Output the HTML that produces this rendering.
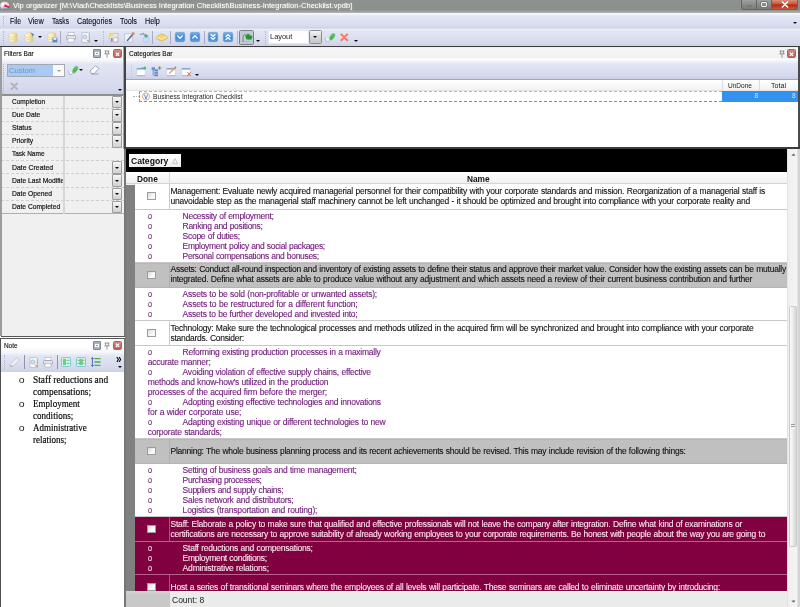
<!DOCTYPE html>
<html><head><meta charset="utf-8"><title>Vip organizer</title>
<style>
*{box-sizing:border-box;margin:0;padding:0}
html,body{width:800px;height:607px;overflow:hidden;background:#f0f0f0}
body{font-family:"Liberation Sans",sans-serif;font-size:6.8px;color:#1a1a1a;position:relative;line-height:1}
.a{position:absolute}
.t{position:absolute;white-space:pre;line-height:1}
/* title bar */
#title{left:0;top:0;width:800px;height:13px;background:linear-gradient(#8e928e 0,#8c908c 10.2px,#9fa39f 11px,#a4a8a4 12.4px,#c8cad0 13px);}
#title .t{color:#fff;font-size:7.9px;left:12.8px;top:2px;text-shadow:0 0 2px #fff8}
#menubar{left:0;top:13px;width:800px;height:15px;background:linear-gradient(#fbfbfe 0,#e3e6f4 3px,#d9ddef 12px,#cfd4e8);}
#menubar .t{font-size:8.3px;color:#101020;top:3.9px;-webkit-text-stroke:.12px #101020}
#toolbar{left:0;top:27.5px;width:800px;height:18.5px;background:linear-gradient(#c8ccde 0,#eceef8 1px,#e2e5f3 4px,#d6daec 14px,#cdd2e6);}
.hline{position:absolute;height:2px;background:#3c3c3c}
.vline{position:absolute;width:2px;background:#4a4a4a}
.ptitle{position:absolute;height:13px;background:linear-gradient(#ffffff 60%,#f6f6f6);}
.ptitle .t{left:3px;top:2px;font-size:7.6px;color:#161616;-webkit-text-stroke:.16px #161616}
.ptool{position:absolute;background:linear-gradient(#f7f8fc 0,#e2e5f3 4px,#d5d9ec 80%,#cbd0e6);}
.grip{position:absolute;width:1px;border-left:1px dotted #b4b8cc}
.sep{position:absolute;width:1px;background:#a9adc4}
/* filter grid */
.frow{position:absolute;left:1px;width:123px;height:13.11px;border-bottom:1px dashed #cfcfcf;background:#f0f0f0}
.frow .t{left:11.1px;top:2.7px;font-size:7.6px;color:#141414;-webkit-text-stroke:.2px #141414;transform-origin:0 0}
.frow i{position:absolute;left:62.4px;top:0;width:1.2px;height:13.2px;background:#d6d6d6}
.frow b{position:absolute;left:111.2px;top:0;width:10.2px;height:12.6px;border:1px solid #9c9c9c;border-radius:1px;background:linear-gradient(#f8f8f8,#e4e4e4 45%,#d2d2d2)}
.frow b:after{content:"";position:absolute;left:1.9px;top:4.3px;border:2.2px solid transparent;border-top:2.6px solid #0a0a0a;border-bottom:0}
/* grid */
.row{position:absolute;left:135px;width:652.5px;}
.row .c1{position:absolute;left:0;top:0;bottom:0;width:35px;border-right:1.2px solid #cccccc}
.row .cb{position:absolute;left:12.3px;width:8.3px;height:8.2px;border:1px solid #9c9c9c;background:linear-gradient(135deg,#d8d8d8,#f8f8f8 60%)}
.row .t{left:35.5px;font-size:8.5px;letter-spacing:-.22px;word-spacing:.35px;color:#111;-webkit-text-stroke:.1px #111;margin-top:.25px}
.w{background:#fff;border-bottom:1px solid #c8c8c8}
.g{background:#c0c0c0;border-bottom:1px solid #b4b4b4;box-shadow:inset 0 1px 0 #b8b8b8}
.g .c1{border-right-color:#b0b0b0 !important}
.m{background:#800040;border-bottom:1px solid #b86090}
.m .t{color:#fbe6ee !important;-webkit-text-stroke-color:#fbe6ee !important}
.m .c1{border-right-color:#a85080 !important}
.pv{position:absolute;left:135px;width:652.5px;background:#fff;border-bottom:1px solid #c8c8c8}
.pv .t{font-size:8.5px;letter-spacing:-.22px;word-spacing:.35px;color:#70187a;-webkit-text-stroke:.12px #70187a;margin-top:.35px}
.pv.m{background:#800040;border-bottom-color:#b86090}
.pv .bu{letter-spacing:0;font-size:9px;margin-top:.1px;transform:scaleX(.8);transform-origin:0 0;-webkit-text-stroke:.1px currentColor;color:#5e2a62}
.pv.m .bu{color:#f4e4ec !important}

.ic{position:absolute;overflow:visible}
.dd{position:absolute;width:0;height:0;border-left:2px solid transparent;border-right:2px solid transparent;border-top:2.5px solid #0a0a14}
.wb{position:absolute;top:0;height:9.6px;border:1px solid #626662;border-top:0}
</style></head><body><div id="root" style="position:absolute;left:0;top:0;width:800px;height:607px;overflow:hidden;will-change:transform;filter:blur(.4px)">
<!-- title bar -->
<div class="a" id="title"><span class="t" style="font-size:7.9px;transform:scaleX(0.959);transform-origin:0 0">Vip organizer [M:\Vlad\Checklists\Business Integration Checklist\Business-Integration-Checklist.vpdb]</span>
<svg class="ic" style="left:0px;top:1px" width="11" height="10" viewBox="0 0 11 10"><ellipse cx="4.6" cy="4.4" rx="4.4" ry="3.6" fill="#f0dce4"/><path d="M4 3 L9.6 5.6 L8.8 7.2 L3.4 5.2 Z" fill="#d03038"/><path d="M2.4 6.6 H8 V9.4 H2.4 Z" fill="#7088c8" opacity=".75"/><circle cx="3" cy="3.4" r="1.6" fill="#fff"/></svg>
<div class="wb" style="left:741px;width:16px;border-radius:0 0 0 3px;background:linear-gradient(#a0a0a0,#8a8a8a 50%,#7c7c7c)"><div class="a" style="left:3.5px;top:4.8px;width:7px;height:2.6px;background:#f4f4f4;border:.5px solid #777;border-radius:1px"></div></div>
<div class="wb" style="left:756px;width:16px;background:linear-gradient(#a0a0a0,#8a8a8a 50%,#7c7c7c)"><div class="a" style="left:4px;top:1.8px;width:6px;height:5.4px;border:1.4px solid #f0f0f0;outline:.5px solid #777;border-radius:1px"></div></div>
<div class="wb" style="left:771px;width:27px;border-radius:0 0 3px 0;background:linear-gradient(#d89080,#c8543c 45%,#b02c10 55%,#c8583a)"><svg class="ic" style="left:9px;top:1.2px" width="8" height="7" viewBox="0 0 8 7"><path d="M1.4 1 L6.6 6 M6.6 1 L1.4 6" stroke="#fff" stroke-width="1.6" stroke-linecap="round"/></svg></div>
</div>
<div class="a" id="menubar">
<span class="t" style="left:10px;font-size:8.3px;transform:scaleX(0.822);transform-origin:0 0">File</span><span class="t" style="left:28px;font-size:8.3px;transform:scaleX(0.88);transform-origin:0 0">View</span><span class="t" style="left:52px;font-size:8.3px;transform:scaleX(0.801);transform-origin:0 0">Tasks</span><span class="t" style="left:77px;font-size:8.3px;transform:scaleX(0.875);transform-origin:0 0">Categories</span><span class="t" style="left:120px;font-size:8.3px;transform:scaleX(0.877);transform-origin:0 0">Tools</span><span class="t" style="left:145px;font-size:8.3px;transform:scaleX(0.872);transform-origin:0 0">Help</span>
<div class="grip" style="left:3px;top:3px;height:10px"></div><div class="dd" style="left:792.8px;top:9.3px;border-width:2.4px 2.2px 0 2.2px"></div>
</div>
<div class="a" id="toolbar">
<div class="grip" style="left:3px;top:3px;height:14px"></div>
<svg class="ic" style="left:7.5px;top:4px" width="11" height="11" viewBox="0 0 11 11"><defs><linearGradient id="dbg7.5" x1="0" x2="1"><stop offset="0" stop-color="#fffbe2"/><stop offset=".6" stop-color="#f6e8a8"/><stop offset="1" stop-color="#dcc278"/></linearGradient></defs><path d="M1 2.2 C1 .4 9 .4 9 2.2 V8.6 C9 10.6 1 10.6 1 8.6 Z" fill="url(#dbg7.5)" stroke="#d4c088" stroke-width=".5"/><path d="M1 4.4 C2 5.8 8 5.8 9 4.4 M1 6.6 C2 8 8 8 9 6.6" fill="none" stroke="#e0cc90" stroke-width=".6"/></svg><svg class="ic" style="left:23.5px;top:4px" width="11" height="11" viewBox="0 0 11 11"><defs><linearGradient id="dbg23.5" x1="0" x2="1"><stop offset="0" stop-color="#fffbe2"/><stop offset=".6" stop-color="#f6e8a8"/><stop offset="1" stop-color="#dcc278"/></linearGradient></defs><path d="M1 2.2 C1 .4 9 .4 9 2.2 V8.6 C9 10.6 1 10.6 1 8.6 Z" fill="url(#dbg23.5)" stroke="#d4c088" stroke-width=".5"/><path d="M1 4.4 C2 5.8 8 5.8 9 4.4 M1 6.6 C2 8 8 8 9 6.6" fill="none" stroke="#e0cc90" stroke-width=".6"/><path d="M6.6 .4 L10.2 2.6 L8.6 4.6 Z" fill="#5a84cc"/></svg>
<div class="dd" style="left:37.5px;top:8px"></div>
<svg class="ic" style="left:47px;top:4px" width="11" height="11" viewBox="0 0 11 11"><defs><linearGradient id="dbg47" x1="0" x2="1"><stop offset="0" stop-color="#fffbe2"/><stop offset=".6" stop-color="#f6e8a8"/><stop offset="1" stop-color="#dcc278"/></linearGradient></defs><path d="M1 2.2 C1 .4 9 .4 9 2.2 V8.6 C9 10.6 1 10.6 1 8.6 Z" fill="url(#dbg47)" stroke="#d4c088" stroke-width=".5"/><path d="M1 4.4 C2 5.8 8 5.8 9 4.4 M1 6.6 C2 8 8 8 9 6.6" fill="none" stroke="#e0cc90" stroke-width=".6"/><rect x="5.4" y="5.8" width="5" height="4.6" fill="#6484cc"/><rect x="6.4" y="5.8" width="3" height="2" fill="#eef0fa"/></svg>
<div class="sep" style="left:60px;top:3px;height:13px"></div>
<svg class="ic" style="left:65.5px;top:4px" width="10" height="11" viewBox="0 0 10 11"><rect x="2" y=".5" width="6" height="3" fill="#fff" stroke="#a0a4b4" stroke-width=".5"/><rect x=".5" y="3.5" width="9" height="4" rx="1" fill="#e4e6ee" stroke="#8a8e9e" stroke-width=".6"/><rect x="2" y="6.5" width="6" height="3.6" fill="#fff" stroke="#9a9eae" stroke-width=".5"/></svg>
<svg class="ic" style="left:81px;top:4px" width="10" height="11" viewBox="0 0 10 11"><rect x="1" y=".8" width="7.6" height="9.4" fill="#fbfbfd" stroke="#a8acbc" stroke-width=".6"/><circle cx="4" cy="5" r="2.2" fill="#c8e0f0" stroke="#90a8c0" stroke-width=".5"/><path d="M6 8 L9 10" stroke="#d09070" stroke-width="1.2"/><rect x="7.6" y="2" width="1.4" height="7" fill="#c8b8a8"/></svg>
<div class="dd" style="left:94px;top:12.5px;border-width:2.3px 2.1px 0 2.1px"></div>
<div class="grip" style="left:103px;top:3px;height:14px"></div>
<svg class="ic" style="left:108px;top:4px" width="11" height="11" viewBox="0 0 11 11"><rect x="2" y="1.5" width="8" height="8.5" fill="#e8ecf6" stroke="#9aa4c0" stroke-width=".5"/><path d="M.5 2 L5.5 1 L6 4 L1 5 Z" fill="#f6e060"/><circle cx="7.6" cy="7.6" r="2.6" fill="#fbeef0" stroke="#e0909c" stroke-width=".7"/><rect x="3" y="6" width="1.6" height="3.6" fill="#8090b0"/></svg>
<svg class="ic" style="left:124px;top:4px" width="11" height="11" viewBox="0 0 11 11"><rect x=".8" y="1.6" width="7.6" height="8.4" fill="#eef0f8" stroke="#aab0c8" stroke-width=".5"/><path d="M3 9 L8.6 2.4" stroke="#6a7088" stroke-width="1.6"/><circle cx="9.2" cy="1.6" r="1.4" fill="#e08060"/></svg>
<svg class="ic" style="left:139px;top:4px" width="11" height="11" viewBox="0 0 11 11"><ellipse cx="7" cy="7.6" rx="3" ry="2.8" fill="#c4e0f6" stroke="#9cc0e4" stroke-width=".5"/><path d="M1 2.6 L4.4 1.4 L6 4.4" fill="none" stroke="#8898d0" stroke-width="1.2"/><path d="M6 1.6 L9.6 4 L6.4 6 Z" fill="#4cb04c"/></svg>
<div class="sep" style="left:152px;top:3px;height:13px"></div>
<svg class="ic" style="left:156px;top:5px" width="12" height="9" viewBox="0 0 12 9"><path d="M.5 4 L5.6 .8 L11.2 3.4 L11.2 5.4 L5.6 8.2 L.5 5.6 Z" fill="#f0d878" stroke="#c8a84c" stroke-width=".6"/><path d="M.5 4 L5.6 6.2 L11.2 3.4" fill="none" stroke="#fff6c0" stroke-width=".7"/></svg>
<div class="sep" style="left:170px;top:3px;height:13px"></div>
<svg class="ic" style="left:175px;top:4.5px" width="10" height="10" viewBox="0 0 10 10"><defs><linearGradient id="bb175" x1="0" y1="0" x2="0" y2="1"><stop offset="0" stop-color="#7ab4ec"/><stop offset=".5" stop-color="#3f88d8"/><stop offset="1" stop-color="#5a9ce0"/></linearGradient></defs><rect x=".3" y=".3" width="9.4" height="9.4" rx="1.6" fill="url(#bb175)" stroke="#5a8ccc" stroke-width=".5"/><path d="M2.8 4 L5 6.2 L7.2 4" fill="none" stroke="#fff" stroke-width="1.3" stroke-linecap="round" stroke-linejoin="round"/></svg><svg class="ic" style="left:190px;top:4.5px" width="10" height="10" viewBox="0 0 10 10"><defs><linearGradient id="bb190" x1="0" y1="0" x2="0" y2="1"><stop offset="0" stop-color="#7ab4ec"/><stop offset=".5" stop-color="#3f88d8"/><stop offset="1" stop-color="#5a9ce0"/></linearGradient></defs><rect x=".3" y=".3" width="9.4" height="9.4" rx="1.6" fill="url(#bb190)" stroke="#5a8ccc" stroke-width=".5"/><path d="M2.8 6 L5 3.8 L7.2 6" fill="none" stroke="#fff" stroke-width="1.3" stroke-linecap="round" stroke-linejoin="round"/></svg>
<div class="sep" style="left:204px;top:3px;height:13px"></div>
<svg class="ic" style="left:208px;top:4.5px" width="10" height="10" viewBox="0 0 10 10"><defs><linearGradient id="bb208" x1="0" y1="0" x2="0" y2="1"><stop offset="0" stop-color="#7ab4ec"/><stop offset=".5" stop-color="#3f88d8"/><stop offset="1" stop-color="#5a9ce0"/></linearGradient></defs><rect x=".3" y=".3" width="9.4" height="9.4" rx="1.6" fill="url(#bb208)" stroke="#5a8ccc" stroke-width=".5"/><path d="M3 2.6 L5 4.4 L7 2.6 M3 5.4 L5 7.2 L7 5.4" fill="none" stroke="#fff" stroke-width="1.3" stroke-linecap="round" stroke-linejoin="round"/></svg><svg class="ic" style="left:223px;top:4.5px" width="10" height="10" viewBox="0 0 10 10"><defs><linearGradient id="bb223" x1="0" y1="0" x2="0" y2="1"><stop offset="0" stop-color="#7ab4ec"/><stop offset=".5" stop-color="#3f88d8"/><stop offset="1" stop-color="#5a9ce0"/></linearGradient></defs><rect x=".3" y=".3" width="9.4" height="9.4" rx="1.6" fill="url(#bb223)" stroke="#5a8ccc" stroke-width=".5"/><path d="M3 4.6 L5 2.8 L7 4.6 M3 7.4 L5 5.6 L7 7.4" fill="none" stroke="#fff" stroke-width="1.3" stroke-linecap="round" stroke-linejoin="round"/></svg>
<div class="sep" style="left:236.5px;top:3px;height:13px;background:#b8bccf"></div>
<div class="a" style="left:239px;top:2px;width:15px;height:15px;border:1px solid #7c808c;border-radius:1.5px;background:#c4c9d8"></div>
<svg class="ic" style="left:241.5px;top:4px" width="11" height="11" viewBox="0 0 11 11"><path d="M1 10 V5 C1 2.6 3 2.2 4 3.4" fill="none" stroke="#6a8a6a" stroke-width="1"/><path d="M3.2 3.4 L6 1.4 L10.6 4.6 L9.2 7.8 L4.4 7.2 Z" fill="#23912f"/><path d="M4 3.8 L6.2 2.4 L9.4 4.8" fill="none" stroke="#4cb84c" stroke-width=".7"/><path d="M2 10 H8" stroke="#a8b8a8" stroke-width=".8"/></svg>
<div class="dd" style="left:255.5px;top:12.5px;border-width:2.3px 2.1px 0 2.1px"></div>
<div class="grip" style="left:265px;top:3px;height:14px"></div>
<div class="a" style="left:268px;top:2.5px;width:41px;height:13.5px;background:#fff;border:1px solid #e4e6f0"></div>
<span class="t" style="left:270px;top:5.5px;color:#1c1c24;font-size:8.0px;transform:scaleX(0.928);transform-origin:0 0">Layout</span>
<div class="a" style="left:309px;top:2.5px;width:12.5px;height:13.5px;border:1px solid #8c8c8c;border-radius:1.5px;background:linear-gradient(#f4f4f4,#d6d6d6 50%,#c6c6c6)"><div class="dd" style="left:3.2px;top:4.5px;border-width:2.5px 2.2px 0 2.2px"></div></div>
<svg class="ic" style="left:324px;top:4px" width="12" height="11" viewBox="0 0 12 11"><path d="M1.2 5.6 L2.2 9.6 L4.4 9.8 L6 7.6" fill="#f4f6fc" stroke="#a0a8d8" stroke-width=".8"/><ellipse cx="8.2" cy="4.8" rx="2.3" ry="4.2" transform="rotate(32 8.2 4.8)" fill="#52b45a" stroke="#c4e4d0" stroke-width=".6"/><path d="M7.4 2.6 L9.4 3.8" stroke="#8cd494" stroke-width=".8"/></svg>
<svg class="ic" style="left:340.3px;top:5.2px" width="8.6" height="8.6" viewBox="0 0 10 10"><path d="M1.6 1.6 L8.4 8.4 M8.4 1.6 L1.6 8.4" stroke="#ec7c68" stroke-width="2.3" stroke-linecap="round"/></svg>
<div class="dd" style="left:353.5px;top:12.5px;border-width:2.3px 2.1px 0 2.1px"></div>
</div>
<div class="hline" style="left:0;top:45.7px;width:800px;height:1.4px"></div>

<!-- LEFT: Filters Bar -->
<div class="a" style="left:1px;top:47px;width:123px;height:2px;background:#fff"></div><div class="ptitle" style="left:1px;top:48px;width:123px"><span class="t" style="font-size:7.6px;transform:scaleX(0.858);transform-origin:0 0">Filters Bar</span><div class="a" style="left:91.5px;top:1.2px;width:8.5px;height:8.5px;border:1px solid #7c8698;border-radius:1px;background:#aab2c2"><div class="a" style="left:1.5px;top:1.8px;width:3.6px;height:3px;border:.8px solid #fff;background:#8c96aa"></div></div><svg class="ic" style="left:103.0px;top:1.7px" width="6" height="8" viewBox="0 0 6 8"><path d="M.6 1 H5.4 M1.6 1 V3.6 M4.4 1 V3.6 M.3 3.8 H5.7 M3 4 V7.6" stroke="#6a6a6a" stroke-width=".7" fill="none"/></svg><div class="a" style="left:111.5px;top:1.2px;width:9px;height:9px;border:1px solid #a06860;border-radius:1.5px;background:linear-gradient(#d08c84,#b85c54)"><svg class="ic" style="left:1.2px;top:1.4px" width="5" height="4.6" viewBox="0 0 5 4.6"><path d="M.8 .6 L4.2 4 M4.2 .6 L.8 4" stroke="#fff" stroke-width="1.1"/></svg></div></div>
<div class="ptool" style="left:1px;top:60px;width:123px;height:35px"><div class="grip" style="left:2px;top:4px;height:29px"></div>
<div class="a" style="left:6.3px;top:3.8px;width:57.5px;height:13.7px;border:1px solid #a4a8b4;background:#f8f8f8"></div>
<div class="a" style="left:7.3px;top:4.8px;width:44.5px;height:11.7px;background:#a9cbf3"></div>
<span class="t" style="left:8.3px;top:7px;color:#7690b6;font-size:8.0px;transform:scaleX(0.943);transform-origin:0 0">Custom</span>
<div class="dd" style="left:55.8px;top:9.8px;border-top-color:#9a9a9a"></div>
<svg class="ic" style="left:66px;top:4px" width="12" height="12" viewBox="0 0 12 12"><path d="M1.2 6.4 L2.2 10.4 L4.4 10.6 L6 8.4" fill="#f4f6fc" stroke="#a0a8d8" stroke-width=".8"/><ellipse cx="8.2" cy="5.6" rx="2.3" ry="4.2" transform="rotate(32 8.2 5.6)" fill="#52b45a" stroke="#c4e4d0" stroke-width=".6"/><path d="M7.4 3.4 L9.4 4.6" stroke="#8cd494" stroke-width=".8"/></svg>
<div class="dd" style="left:77.8px;top:9px;border-width:2.3px 2.1px 0 2.1px"></div>
<svg class="ic" style="left:88px;top:5px" width="11" height="10" viewBox="0 0 11 10"><path d="M1 6 L6.4 .8 L10 3.4 L5 8.6 H2.4 Z" fill="#fbfbfd" stroke="#8a8e9a" stroke-width=".7"/><path d="M2 9 H9.6" stroke="#8a8e9a" stroke-width=".7"/></svg>
<svg class="ic" style="left:9px;top:22px" width="8.5" height="8.5" viewBox="0 0 9 9"><path d="M1.6 1.6 L7.4 7.4 M7.4 1.6 L1.6 7.4" stroke="#b0b4b2" stroke-width="2" stroke-linecap="round"/></svg>
<div class="dd" style="left:116.5px;top:28.5px;border-width:2.3px 2.1px 0 2.1px"></div></div>
<div class="a" style="left:1px;top:94.3px;width:123px;height:1.4px;background:#909090"></div>
<div class="frow" style="top:95.8px"><span class="t" style="font-size:7.6px;transform:scaleX(0.861);transform-origin:0 0">Completion</span><i></i><b></b></div>
<div class="frow" style="top:108.91px"><span class="t" style="top:1.9px;font-size:7.6px;transform:scaleX(0.879);transform-origin:0 0">Due Date</span><i></i><b></b></div>
<div class="frow" style="top:122.02px"><span class="t" style="top:1.9px;font-size:7.6px;transform:scaleX(0.91);transform-origin:0 0">Status</span><i></i><b></b></div>
<div class="frow" style="top:135.13px"><span class="t" style="top:1.9px;font-size:7.6px;transform:scaleX(0.897);transform-origin:0 0">Priority</span><i></i><b></b></div>
<div class="frow" style="top:148.24px"><span class="t" style="top:1.9px;font-size:7.6px;transform:scaleX(0.856);transform-origin:0 0">Task Name</span><i></i></div>
<div class="frow" style="top:161.35px"><span class="t" style="font-size:7.6px;transform:scaleX(0.91);transform-origin:0 0">Date Created</span><i></i><b></b></div>
<div class="frow" style="top:174.46px"><div class="a" style="left:0;top:0;width:61.7px;height:12.5px;overflow:hidden"><span class="t" style="transform:scaleX(.885);transform-origin:0 0">Date Last Modifie</span></div><i></i><b></b></div>
<div class="frow" style="top:187.57px"><span class="t" style="font-size:7.6px;transform:scaleX(0.887);transform-origin:0 0">Date Opened</span><i></i><b></b></div>
<div class="frow" style="top:200.68px;border-bottom:1px solid #b0b0b0"><span class="t" style="font-size:7.6px;transform:scaleX(0.877);transform-origin:0 0">Date Completed</span><i></i><b></b></div>
<div class="a" style="left:123px;top:47px;height:102px;width:1.4px;background:#a4a4a4"></div><div class="vline" style="left:124.3px;top:47px;height:102px;width:1.8px;background:#444"></div><div class="vline" style="left:124px;top:149px;height:458px;background:#777"></div>
<div class="a" style="left:0;top:47px;width:1.6px;height:289px;background:#9c9c9c"></div><div class="a" style="left:0;top:339px;width:1.1px;height:268px;background:#505050"></div>
<div class="a" style="left:0;top:335.8px;width:125px;height:3.2px;background:#fafafa"></div><div class="a" style="left:1px;top:335.8px;width:124px;height:.9px;background:#585858"></div><div class="a" style="left:0;top:338.1px;width:125px;height:.9px;background:#585858"></div>

<!-- LEFT: Note -->
<div class="ptitle" style="left:1px;top:338.5px;width:123px;height:13.5px"><span class="t" style="top:3.3px;font-size:7.6px;transform:scaleX(0.841);transform-origin:0 0">Note</span><div class="a" style="left:91.5px;top:2.6px;width:8.5px;height:8.5px;border:1px solid #7c8698;border-radius:1px;background:#aab2c2"><div class="a" style="left:1.5px;top:1.8px;width:3.6px;height:3px;border:.8px solid #fff;background:#8c96aa"></div></div><svg class="ic" style="left:103.0px;top:3.1px" width="6" height="8" viewBox="0 0 6 8"><path d="M.6 1 H5.4 M1.6 1 V3.6 M4.4 1 V3.6 M.3 3.8 H5.7 M3 4 V7.6" stroke="#6a6a6a" stroke-width=".7" fill="none"/></svg><div class="a" style="left:111.5px;top:2.6px;width:9px;height:9px;border:1px solid #a06860;border-radius:1.5px;background:linear-gradient(#d08c84,#b85c54)"><svg class="ic" style="left:1.2px;top:1.4px" width="5" height="4.6" viewBox="0 0 5 4.6"><path d="M.8 .6 L4.2 4 M4.2 .6 L.8 4" stroke="#fff" stroke-width="1.1"/></svg></div></div>
<div class="ptool" style="left:1px;top:352px;width:123px;height:19.5px"><div class="grip" style="left:3px;top:3px;height:14px"></div>
<svg class="ic" style="left:8px;top:4px" width="12" height="12" viewBox="0 0 12 12"><path d="M1 10.6 L2 7.4 L8 1.6 L10.6 4 L4.6 9.8 Z" fill="#f0f0f4" stroke="#b8b8c0" stroke-width=".7"/><path d="M1 10.6 L3.6 10" stroke="#a8a8a8" stroke-width=".8"/></svg>
<div class="sep" style="left:22.5px;top:3px;height:14px;background:#9094a8"></div>
<svg class="ic" style="left:28px;top:4.5px" width="10" height="11" viewBox="0 0 10 11"><rect x="1" y=".8" width="7.6" height="9.4" fill="#fbfbfd" stroke="#a8acbc" stroke-width=".6"/><circle cx="4" cy="5" r="2.2" fill="#c8e0f0" stroke="#90a8c0" stroke-width=".5"/><path d="M6 8 L9 10" stroke="#d09070" stroke-width="1.2"/><rect x="7.6" y="2" width="1.4" height="7" fill="#c8b8a8"/></svg>
<svg class="ic" style="left:42px;top:4.5px" width="10" height="11" viewBox="0 0 10 11"><rect x="2" y=".5" width="6" height="3" fill="#fff" stroke="#a0a4b4" stroke-width=".5"/><rect x=".5" y="3.5" width="9" height="4" rx="1" fill="#e4e6ee" stroke="#8a8e9e" stroke-width=".6"/><rect x="2" y="6.5" width="6" height="3.6" fill="#fff" stroke="#9a9eae" stroke-width=".5"/></svg>
<div class="sep" style="left:55.5px;top:3px;height:14px;background:#9094a8"></div>
<svg class="ic" style="left:60px;top:5px" width="10" height="10" viewBox="0 0 10 10"><rect x=".5" y=".5" width="9" height="9" rx="1" fill="#d4f2e0" stroke="#6cc0cc" stroke-width=".8"/><rect x="2" y="2" width="3" height="6" fill="#6ccc88"/><path d="M5.6 3.4 H8.4 M5.6 6.4 H8.4" stroke="#6ccc88" stroke-width="1"/></svg>
<svg class="ic" style="left:75px;top:5px" width="10" height="10" viewBox="0 0 10 10"><rect x=".5" y=".5" width="9" height="9" rx="1" fill="#d4f2e0" stroke="#6cc0cc" stroke-width=".8"/><rect x="3.4" y="2" width="3.2" height="6" fill="#6ccc88"/><path d="M1.6 3.4 H8.4 M1.6 6.4 H8.4" stroke="#6ccc88" stroke-width="1"/></svg>
<svg class="ic" style="left:90px;top:5px" width="10" height="10" viewBox="0 0 10 10"><path d="M3.4 1.6 H9.6 M3.4 5 H9.6 M3.4 8.4 H9.6" stroke="#58a858" stroke-width="1.3"/><path d="M1.4 .6 V9.4 M.4 2 L1.4 .6 L2.4 2 M.4 8 L1.4 9.4 L2.4 8" stroke="#3a5cb8" stroke-width=".9" fill="none"/></svg>
<span class="t" style="left:115.4px;top:.5px;font-size:12.5px;font-weight:bold;color:#0c0c0c;transform:scaleX(.8);transform-origin:0 0">»</span>
<div class="dd" style="left:116.5px;top:14px;border-width:2.3px 2.1px 0 2.1px"></div></div>
<div class="a" id="note" style="left:1px;top:371.5px;width:123px;height:236px;background:#fff;font-family:'Liberation Serif',serif;font-size:9.5px;color:#000;-webkit-text-stroke:.15px #000">
<span class="t" style="left:17.6px;top:3.8px;font-family:'Liberation Sans',sans-serif;font-size:9.6px;-webkit-text-stroke:0;color:#222;transform:scaleX(1.1);transform-origin:50% 50%">o</span><span class="t" style="left:32.1px;top:4.4px;transform:scaleX(0.984);transform-origin:0 0">Staff reductions and</span>
<span class="t" style="left:32.1px;top:16.4px;transform:scaleX(0.983);transform-origin:0 0">compensations;</span>
<span class="t" style="left:17.6px;top:27.8px;font-family:'Liberation Sans',sans-serif;font-size:9.6px;-webkit-text-stroke:0;color:#222;transform:scaleX(1.1);transform-origin:50% 50%">o</span><span class="t" style="left:32.1px;top:28.4px;transform:scaleX(0.954);transform-origin:0 0">Employment</span>
<span class="t" style="left:32.1px;top:40.4px;transform:scaleX(0.954);transform-origin:0 0">conditions;</span>
<span class="t" style="left:17.6px;top:51.8px;font-family:'Liberation Sans',sans-serif;font-size:9.6px;-webkit-text-stroke:0;color:#222;transform:scaleX(1.1);transform-origin:50% 50%">o</span><span class="t" style="left:32.1px;top:52.4px;transform:scaleX(0.944);transform-origin:0 0">Administrative</span>
<span class="t" style="left:32.1px;top:64.4px;transform:scaleX(0.95);transform-origin:0 0">relations;</span>
</div>

<!-- RIGHT: Categories Bar -->
<div class="ptitle" style="left:126px;top:48px;width:672px;height:12px;background:linear-gradient(#f6f6f6,#f2f2f2 10px,#fff 11.4px)"><span class="t" style="font-size:7.6px;transform:scaleX(0.859);transform-origin:0 0">Categories Bar</span><svg class="ic" style="left:652.5px;top:1.7px" width="6" height="8" viewBox="0 0 6 8"><path d="M.6 1 H5.4 M1.6 1 V3.6 M4.4 1 V3.6 M.3 3.8 H5.7 M3 4 V7.6" stroke="#6a6a6a" stroke-width=".7" fill="none"/></svg><div class="a" style="left:661px;top:1.2px;width:9px;height:9px;border:1px solid #a06860;border-radius:1.5px;background:linear-gradient(#d08c84,#b85c54)"><svg class="ic" style="left:1.2px;top:1.4px" width="5" height="4.6" viewBox="0 0 5 4.6"><path d="M.8 .6 L4.2 4 M4.2 .6 L.8 4" stroke="#fff" stroke-width="1.1"/></svg></div></div>
<div class="ptool" style="left:126px;top:60px;width:672px;height:19px"><div class="grip" style="left:5px;top:4.5px;height:13px;border-color:#c0c4d6"></div><svg class="ic" style="left:9.7px;top:5.6px" width="11" height="11" viewBox="0 0 11 11"><rect x=".8" y="2.2" width="8.4" height="7.4" fill="#fdfdfe" stroke="#c4c8d8" stroke-width=".5"/><rect x=".8" y="2.2" width="8.4" height="1.3" fill="#6c98d0"/><path d="M.8 9.7 H9.2" stroke="#9aa0b4" stroke-width=".7"/><path d="M5.6 2 H9.6 M8.2 .6 L10 2 L8.2 3.4" stroke="#4cac54" stroke-width="1" fill="none"/></svg>
<svg class="ic" style="left:24.7px;top:5.6px" width="11" height="11" viewBox="0 0 11 11"><rect x=".6" y="1.4" width="3.4" height="2.4" fill="#5c88cc"/><path d="M2.2 3.6 V9.6" stroke="#6c94d0" stroke-width="1"/><rect x="3.4" y="3.4" width="3.6" height="2" fill="#5c88cc"/><rect x="3.4" y="5.9" width="3.6" height="2" fill="#6c94d0"/><rect x="3.4" y="8.4" width="3.6" height="1.8" fill="#5c88cc"/><path d="M6.8 2 H10.4 M8.6 .2 V3.8" stroke="#4cac54" stroke-width="1.1"/></svg>
<svg class="ic" style="left:39.7px;top:5.6px" width="11" height="11" viewBox="0 0 11 11"><rect x=".8" y="2.2" width="8.4" height="7.4" fill="#fdfdfe" stroke="#c4c8d8" stroke-width=".5"/><rect x=".8" y="2.2" width="8.4" height="1.3" fill="#6c98d0"/><path d="M.8 9.7 H9.2" stroke="#9aa0b4" stroke-width=".7"/><path d="M3.2 7.6 L8.8 2" stroke="#c8a070" stroke-width="1.3"/><circle cx="9.3" cy="1.5" r="1" fill="#e4705c"/></svg><svg class="ic" style="left:54.7px;top:5.6px" width="11" height="11" viewBox="0 0 11 11"><rect x=".8" y="2.2" width="8.4" height="7.4" fill="#fdfdfe" stroke="#c4c8d8" stroke-width=".5"/><rect x=".8" y="2.2" width="8.4" height="1.3" fill="#6c98d0"/><path d="M.8 9.7 H9.2" stroke="#9aa0b4" stroke-width=".7"/><path d="M6.2 6 L9.8 9.8 M9.8 6 L6.2 9.8" stroke="#e8705c" stroke-width="1"/></svg>
<div class="dd" style="left:69px;top:13.5px;border-width:2.3px 2.1px 0 2.1px"></div></div>
<div class="a" style="left:126px;top:78.6px;width:672px;height:1px;background:#a4a8b8"></div>
<div class="a" style="left:126px;top:79.5px;width:672px;height:68px;background:#fff"></div>
<div class="a" style="left:126px;top:79.5px;width:672px;height:11px;background:linear-gradient(#fff,#f2f2f2);border-bottom:1px solid #e4e4e4"></div><div class="a" style="left:721.5px;top:80px;width:1px;height:10px;background:#dcdcdc"></div><div class="a" style="left:759px;top:80px;width:1px;height:10px;background:#dcdcdc"></div>
<span class="t" style="left:728px;top:82px;font-size:7.6px;transform:scaleX(0.861);transform-origin:0 0">UnDone</span>
<span class="t" style="left:770.5px;top:82px;font-size:7.6px;transform:scaleX(0.935);transform-origin:0 0">Total</span>
<div class="a" style="left:722px;top:91px;width:76px;height:11px;background:#3292f0"></div>
<span class="t" style="left:754.5px;top:93px;font-size:6.8px;color:#cfe6ff">8</span>
<span class="t" style="left:792px;top:93px;font-size:6.8px;color:#cfe6ff">8</span>
<div class="a" style="left:139px;top:91px;width:583px;height:11px;border:1px dashed #8c8c8c;border-top-color:#b4b4b4;border-right:0"></div>
<svg class="ic" style="left:140.5px;top:92px" width="10" height="9" viewBox="0 0 10 9"><circle cx="5" cy="4.5" r="3.6" fill="#fdfdff" stroke="#e0a050" stroke-width=".9"/><path d="M3.4 2.6 L5 7 L6.6 2.6" fill="none" stroke="#5080d0" stroke-width=".9"/></svg><div class="a" style="left:133px;top:96px;width:6px;height:1px;border-top:1px dotted #b0b0b0"></div><span class="t" style="left:153px;top:93px;font-size:7.6px;transform:scaleX(0.88);transform-origin:0 0">Business Integration Checklist</span>
<div class="vline" style="left:798px;top:47px;height:101px;"></div>
<div class="hline" style="left:126px;top:147px;width:674px"></div>

<!-- group band -->
<div class="a" style="left:126px;top:149px;width:662px;height:23px;background:#000"></div>
<div class="a" style="left:129px;top:154px;width:52px;height:13px;background:linear-gradient(#fff,#ededed);"><span class="t" style="left:2px;top:2.5px;font-size:8.6px;font-weight:bold;color:#111">Category</span><svg class="ic" style="left:42.5px;top:3.5px" width="6" height="6" viewBox="0 0 6 6"><path d="M3 .6 L5.4 5.4 H.6 Z" fill="#f4f4f4" stroke="#b4b4b4" stroke-width=".7"/></svg></div>
<!-- header -->
<div class="a" style="left:126px;top:172px;width:662px;height:12px;background:linear-gradient(#fff,#f1f1f1);border-bottom:1px solid #d4d4d4"></div>
<div class="a" style="left:169px;top:172px;width:1px;height:12px;background:#d8d8d8"></div>
<span class="t" style="left:137px;top:175.3px;font-size:8.3px;font-weight:bold;color:#111">Done</span>
<span class="t" style="left:467px;top:175.3px;font-size:8.3px;font-weight:bold;color:#111">Name</span>
<!-- indicator -->
<div class="a" style="left:126px;top:184.6px;width:9px;height:406.4px;background:#808080"></div>
<div class="a" style="left:135px;top:184px;width:653px;height:407px;background:#fff"></div>

<div class="row w" style="top:184px;height:26px"><div class="c1"><div class="cb" style="top:8px"></div></div>
<span class="t" style="top:3px;letter-spacing:-0.215px">Management: Evaluate newly acquired managerial personnel for their compatibility with your corporate standards and mission. Reorganization of a managerial staff is</span>
<span class="t" style="top:13px;letter-spacing:-0.225px">unavoidable step as the managerial staff machinery cannot be left unchanged - it should be optimized and brought into compliance with your corporate reality and</span></div>
<div class="pv" style="top:210px;height:53px">
<span class="t bu" style="left:12.8px;top:2px">o</span><span class="t" style="left:47.6px;top:2px;letter-spacing:-0.292px">Necessity of employment;</span>
<span class="t bu" style="left:12.8px;top:12px">o</span><span class="t" style="left:47.6px;top:12px;letter-spacing:-0.309px">Ranking and positions;</span>
<span class="t bu" style="left:12.8px;top:22px">o</span><span class="t" style="left:47.6px;top:22px;letter-spacing:-0.278px">Scope of duties;</span>
<span class="t bu" style="left:12.8px;top:32px">o</span><span class="t" style="left:47.6px;top:32px;letter-spacing:-0.321px">Employment policy and social packages;</span>
<span class="t bu" style="left:12.8px;top:42px">o</span><span class="t" style="left:47.6px;top:42px;letter-spacing:-0.325px">Personal compensations and bonuses;</span>
</div>
<div class="row g" style="top:263px;height:25px"><div class="c1"><div class="cb" style="top:8px"></div></div>
<span class="t" style="top:2px;letter-spacing:-0.24px">Assets: Conduct all-round inspection and inventory of existing assets to define their status and approve their market value. Consider how the existing assets can be mutually</span>
<span class="t" style="top:12.1px;letter-spacing:-0.213px">integrated. Define what assets are able to produce value without any adjustment and which assets need a review of their current business contribution and further</span></div>
<div class="pv" style="top:288px;height:33px">
<span class="t bu" style="left:12.8px;top:2px">o</span><span class="t" style="left:47.6px;top:2px;letter-spacing:-0.208px">Assets to be sold (non-profitable or unwanted assets);</span>
<span class="t bu" style="left:12.8px;top:12px">o</span><span class="t" style="left:47.6px;top:12px;letter-spacing:-0.173px">Assets to be restructured for a different function;</span>
<span class="t bu" style="left:12.8px;top:22px">o</span><span class="t" style="left:47.6px;top:22px;letter-spacing:-0.243px">Assets to be further developed and invested into;</span>
</div>
<div class="row w" style="top:321px;height:25px"><div class="c1"><div class="cb" style="top:8px"></div></div>
<span class="t" style="top:3px;letter-spacing:-0.229px">Technology: Make sure the technological processes and methods utilized in the acquired firm will be synchronized and brought into compliance with your corporate</span>
<span class="t" style="top:13px;letter-spacing:-0.267px">standards. Consider:</span></div>
<div class="pv" style="top:346px;height:93px">
<span class="t bu" style="left:12.8px;top:1.6px">o</span><span class="t" style="left:47.6px;top:1.6px;letter-spacing:-0.258px">Reforming existing production processes in a maximally</span>
<span class="t" style="left:12.7px;top:11.6px;letter-spacing:-0.226px">accurate manner;</span>
<span class="t bu" style="left:12.8px;top:21.6px">o</span><span class="t" style="left:47.6px;top:21.6px;letter-spacing:-0.237px">Avoiding violation of effective supply chains, effective</span>
<span class="t" style="left:12.7px;top:31.6px;letter-spacing:-0.231px">methods and know-how’s utilized in the production</span>
<span class="t" style="left:12.7px;top:41.6px;letter-spacing:-0.19px">processes of the acquired firm before the merger;</span>
<span class="t bu" style="left:12.8px;top:51.6px">o</span><span class="t" style="left:47.6px;top:51.6px;letter-spacing:-0.252px">Adopting existing effective technologies and innovations</span>
<span class="t" style="left:12.7px;top:61.6px;letter-spacing:-0.163px">for a wider corporate use;</span>
<span class="t bu" style="left:12.8px;top:71.6px">o</span><span class="t" style="left:47.6px;top:71.6px;letter-spacing:-0.22px">Adapting existing unique or different technologies to new</span>
<span class="t" style="left:12.7px;top:81.6px;letter-spacing:-0.216px">corporate standards;</span>
</div>
<div class="row g" style="top:439px;height:25px"><div class="c1"><div class="cb" style="top:8px"></div></div>
<span class="t" style="top:8px;letter-spacing:-0.245px">Planning: The whole business planning process and its recent achievements should be revised. This may include revision of the following things:</span></div>
<div class="pv" style="top:464px;height:53px">
<span class="t bu" style="left:12.8px;top:2px">o</span><span class="t" style="left:47.6px;top:2px;letter-spacing:-0.26px">Setting of business goals and time management;</span>
<span class="t bu" style="left:12.8px;top:12px">o</span><span class="t" style="left:47.6px;top:12px;letter-spacing:-0.352px">Purchasing processes;</span>
<span class="t bu" style="left:12.8px;top:22px">o</span><span class="t" style="left:47.6px;top:22px;letter-spacing:-0.306px">Suppliers and supply chains;</span>
<span class="t bu" style="left:12.8px;top:32px">o</span><span class="t" style="left:47.6px;top:32px;letter-spacing:-0.206px">Sales network and distributors;</span>
<span class="t bu" style="left:12.8px;top:42px">o</span><span class="t" style="left:47.6px;top:42px;letter-spacing:-0.173px">Logistics (transportation and routing);</span>
</div>
<div class="row m" style="top:517px;height:25px"><div class="c1"><div class="cb" style="top:8px"></div></div>
<span class="t" style="top:2.5px;letter-spacing:-0.21px">Staff: Elaborate a policy to make sure that qualified and effective professionals will not leave the company after integration. Define what kind of examinations or</span>
<span class="t" style="top:12.5px;letter-spacing:-0.224px">certifications are necessary to approve suitability of already working employees to your corporate requirements. Be honest with people about the way you are going to</span></div>
<div class="pv m" style="top:542px;height:33px">
<span class="t bu" style="left:12.8px;top:2px">o</span><span class="t" style="left:47.6px;top:2px;letter-spacing:-0.238px">Staff reductions and compensations;</span>
<span class="t bu" style="left:12.8px;top:12px">o</span><span class="t" style="left:47.6px;top:12px;letter-spacing:-0.29px">Employment conditions;</span>
<span class="t bu" style="left:12.8px;top:22px">o</span><span class="t" style="left:47.6px;top:22px;letter-spacing:-0.174px">Administrative relations;</span>
</div>
<div class="row m" style="top:575px;height:16px;border-bottom:0"><div class="c1"><div class="cb" style="top:8px"></div></div>
<span class="t" style="top:7.6px;letter-spacing:-0.207px">Host a series of transitional seminars where the employees of all levels will participate. These seminars are called to eliminate uncertainty by introducing:</span></div>
<!-- footer -->
<div class="a" style="left:126px;top:591px;width:662px;height:16px;background:#e9eceb;border-top:1px solid #f8f8f8"></div>
<div class="a" style="left:126px;top:591px;width:44.3px;height:16px;background:linear-gradient(#d4d4d4,#c8c8c8 4px)"></div>
<span class="t" style="left:172px;top:595.8px;font-size:8.5px;color:#1a1a1a">Count: 8</span>
<!-- scrollbar -->
<div class="a" id="sb" style="left:787.4px;top:149px;width:12.6px;height:458px;background:linear-gradient(90deg,#d6d6d6 0,#efefef 1px,#f5f5f5 9.8px,#d8d8d8 10.8px,#d2d2d2 12.6px)"></div>
<div class="a" style="left:789.2px;top:306.3px;width:8.3px;height:240.7px;background:linear-gradient(90deg,#fbfbfb,#eeeeee 40%,#d6d6d6);border:1px solid #cbcbcb;border-radius:1.5px"></div>
<div class="a" style="left:791.3px;top:424.3px;width:4.2px;height:4.4px;background:repeating-linear-gradient(#9a9a9a 0,#9a9a9a .8px,#f4f4f4 .8px,#f4f4f4 1.8px)"></div><svg class="ic" style="left:791.2px;top:153.4px" width="5" height="3.4" viewBox="0 0 6 4"><path d="M.4 3.4 L3 .6 L5.6 3.4 Z" fill="#686868"/></svg><svg class="ic" style="left:791.2px;top:600.2px" width="5" height="3.4" viewBox="0 0 6 4"><path d="M.4 .6 L3 3.4 L5.6 .6 Z" fill="#686868"/></svg>
</div></body></html>
